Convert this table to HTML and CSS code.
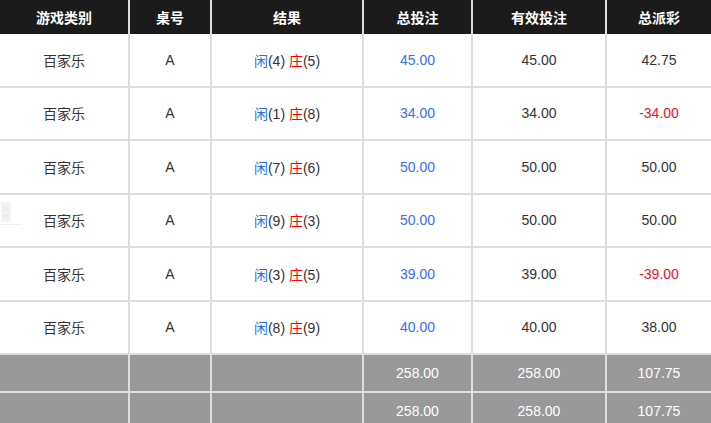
FILE: index.html
```html
<!DOCTYPE html>
<html lang="zh-CN">
<head>
<meta charset="utf-8">
<title>投注记录</title>
<link rel="stylesheet" href="styles.css">
</head>
<body>
<div class="wrap">
<table class="report">
  <thead>
    <tr>
      <th class="c1">游戏类别</th>
      <th class="c2">桌号</th>
      <th class="c3">结果</th>
      <th class="c4">总投注</th>
      <th class="c5">有效投注</th>
      <th class="c6">总派彩</th>
    </tr>
  </thead>
  <tbody>
    <tr>
      <td>百家乐</td><td>A</td>
      <td><span class="xian">闲</span>(4) <span class="zhuang">庄</span>(5)</td>
      <td class="blue">45.00</td><td>45.00</td><td>42.75</td>
    </tr>
    <tr>
      <td>百家乐</td><td>A</td>
      <td><span class="xian">闲</span>(1) <span class="zhuang">庄</span>(8)</td>
      <td class="blue">34.00</td><td>34.00</td><td class="neg">-34.00</td>
    </tr>
    <tr>
      <td>百家乐</td><td>A</td>
      <td><span class="xian">闲</span>(7) <span class="zhuang">庄</span>(6)</td>
      <td class="blue">50.00</td><td>50.00</td><td>50.00</td>
    </tr>
    <tr>
      <td>百家乐</td><td>A</td>
      <td><span class="xian">闲</span>(9) <span class="zhuang">庄</span>(3)</td>
      <td class="blue">50.00</td><td>50.00</td><td>50.00</td>
    </tr>
    <tr>
      <td>百家乐</td><td>A</td>
      <td><span class="xian">闲</span>(3) <span class="zhuang">庄</span>(5)</td>
      <td class="blue">39.00</td><td>39.00</td><td class="neg">-39.00</td>
    </tr>
    <tr>
      <td>百家乐</td><td>A</td>
      <td><span class="xian">闲</span>(8) <span class="zhuang">庄</span>(9)</td>
      <td class="blue">40.00</td><td>40.00</td><td>38.00</td>
    </tr>
    <tr class="sum">
      <td></td><td></td><td></td><td>258.00</td><td>258.00</td><td>107.75</td>
    </tr>
    <tr class="sum">
      <td></td><td></td><td></td><td>258.00</td><td>258.00</td><td>107.75</td>
    </tr>
  </tbody>
</table>
<svg class="mark" width="22" height="30" viewBox="0 0 22 30">
  <rect x="1" y="3" width="10" height="20" fill="#f4f4f4"/>
  <rect x="3" y="8" width="6" height="4" fill="#ececec"/>
  <rect x="3" y="15" width="6" height="4" fill="#ececec"/>
  <rect x="0" y="25" width="22" height="1" fill="#f0f0f0"/>
</svg>
</div>
</body>
</html>
```
FILE: styles.css
```css
html, body {
  margin: 0;
  padding: 0;
  background: #fff;
}
.wrap {
  position: relative;
  width: 711px;
}
.report {
  width: 711px;
  border-collapse: separate;
  border-spacing: 0;
  table-layout: fixed;
  font-family: "Liberation Sans", "Noto Sans CJK SC", sans-serif;
  font-size: 14px;
  color: #333;
}
.report th, .report td {
  box-sizing: border-box;
  text-align: center;
  vertical-align: middle;
  padding: 0;
  border-right: 2px solid #ddd;
}
.report th:last-child, .report td:last-child {
  border-right: none;
}
.report th {
  height: 34px;
  background: #1b1b1b;
  color: #fff;
  font-weight: bold;
  font-size: 14px;
  font-family: "Noto Sans CJK SC", "Liberation Sans", sans-serif;
}
.c1 { width: 130px; }
.c2 { width: 82px; }
.c3 { width: 152px; }
.c4 { width: 109px; }
.c5 { width: 134px; }
.c6 { width: 104px; }
.report tbody td {
  height: 53.5px;
  border-bottom: 2px solid #ddd;
}
.report tbody tr.sum td {
  height: 38px;
  background: #999;
  color: #fff;
}
.xian { color: #1f6fe5; }
.zhuang { color: #f00; }
.blue { color: #3a6df0; }
.neg { color: #f0102a; }
.mark {
  position: absolute;
  left: 0;
  top: 199px;
}
```
